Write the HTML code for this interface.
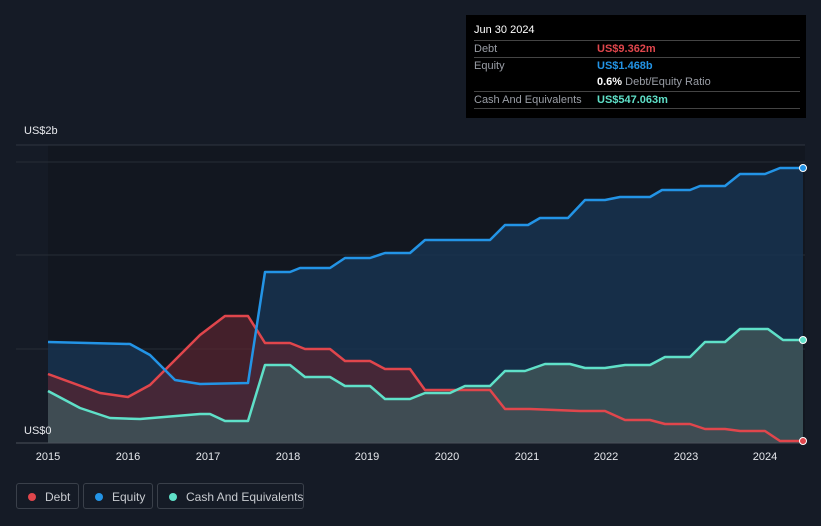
<!DOCTYPE html>
<html><head><meta charset="utf-8"><style>
body{margin:0;width:821px;height:526px;background:#151b26;font-family:"Liberation Sans",sans-serif;overflow:hidden;position:relative}
.tt{position:absolute;left:466px;top:15px;width:340px;height:103px;background:#000;color:#fff;font-size:11px}
.tt .r{position:absolute;left:8px;width:326px;border-top:1px solid #444;height:17px;line-height:17px}
.lab{color:#9a9ea6}
.leg{position:absolute;top:483px;height:26px;border:1px solid #3a404a;border-radius:3px;color:#c8cbd0;font-size:12px;line-height:26px;box-sizing:border-box;white-space:nowrap}
.leg i{position:absolute;left:11px;top:9px;width:8px;height:8px;border-radius:50%}
.leg span{position:absolute;left:28px;white-space:nowrap}
.yr{position:absolute;top:451px;color:#e6e8ec;font-size:11px;transform:translateX(-50%)}
</style></head><body>
<svg width="821" height="526" style="position:absolute;left:0;top:0">
<rect x="48" y="145" width="757" height="298" fill="#121720"/>
<line x1="16" y1="145" x2="805" y2="145" stroke="#2e3440"/>
<line x1="16" y1="162" x2="805" y2="162" stroke="#262c36"/>
<line x1="16" y1="255" x2="805" y2="255" stroke="#262c36"/>
<line x1="16" y1="349" x2="805" y2="349" stroke="#262c36"/>
<polygon fill="#173250" fill-opacity="0.85" points="48,443 48,342 130,344 150,355 175,380 200,384 248,383 265,272 290,272 300,268 330,268 345,258 370,258 385,253 410,253 425,240 460,240 490,240 505,225 528,225 540,218 568,218 585,200 605,200 620,197 650,197 662,190 690,190 700,186 725,186 740,174 765,174 780,168 803,168 803,443"/>
<polygon fill="#5a2530" fill-opacity="0.7" points="48,443 48,374 100,393 128,397 150,385 200,335 225,316 248,316 265,343 290,343 305,349 330,349 345,361 370,361 385,369 410,369 425,390 460,390 490,390 505,409 530,409 580,411 605,411 625,420 650,420 665,424 690,424 705,429 725,429 740,431 765,431 780,441 803,441 803,443"/>
<polygon fill="#3e5358" fill-opacity="0.85" points="48,443 48,391 80,408 110,418 140,419 200,414 210,414 225,421 248,421 265,365 290,365 305,377 330,377 345,386 370,386 385,399 410,399 425,393 450,393 465,386 490,386 505,371 525,371 545,364 570,364 585,368 605,368 625,365 650,365 665,357 690,357 705,342 725,342 740,329 768,329 783,340 803,340 803,443"/>
<g fill="none" stroke-width="2.5" stroke-linejoin="round">
<polyline stroke="#e0464c" points="48,374 100,393 128,397 150,385 200,335 225,316 248,316 265,343 290,343 305,349 330,349 345,361 370,361 385,369 410,369 425,390 460,390 490,390 505,409 530,409 580,411 605,411 625,420 650,420 665,424 690,424 705,429 725,429 740,431 765,431 780,441 803,441"/>
<polyline stroke="#2394e6" points="48,342 130,344 150,355 175,380 200,384 248,383 265,272 290,272 300,268 330,268 345,258 370,258 385,253 410,253 425,240 460,240 490,240 505,225 528,225 540,218 568,218 585,200 605,200 620,197 650,197 662,190 690,190 700,186 725,186 740,174 765,174 780,168 803,168"/>
<polyline stroke="#5fe0c8" points="48,391 80,408 110,418 140,419 200,414 210,414 225,421 248,421 265,365 290,365 305,377 330,377 345,386 370,386 385,399 410,399 425,393 450,393 465,386 490,386 505,371 525,371 545,364 570,364 585,368 605,368 625,365 650,365 665,357 690,357 705,342 725,342 740,329 768,329 783,340 803,340"/>
</g>
<line x1="16" y1="443" x2="805" y2="443" stroke="#4a505a"/>
<circle cx="803" cy="168" r="3.5" fill="#2394e6" stroke="#fff" stroke-width="1"/>
<circle cx="803" cy="340" r="3.5" fill="#5fe0c8" stroke="#fff" stroke-width="1"/>
<circle cx="803" cy="441" r="3.5" fill="#e0464c" stroke="#fff" stroke-width="1"/>
</svg>
<div style="position:absolute;left:24px;top:125px;color:#e6e8ec;font-size:11px">US$2b</div>
<div style="position:absolute;left:24px;top:425px;color:#e6e8ec;font-size:11px">US$0</div>
<div class="yr" style="left:48px">2015</div><div class="yr" style="left:128px">2016</div><div class="yr" style="left:208px">2017</div><div class="yr" style="left:288px">2018</div><div class="yr" style="left:367px">2019</div><div class="yr" style="left:447px">2020</div><div class="yr" style="left:527px">2021</div><div class="yr" style="left:606px">2022</div><div class="yr" style="left:686px">2023</div><div class="yr" style="left:765px">2024</div>
<div class="tt">
<div style="position:absolute;left:8px;top:9px;font-size:11px">Jun 30 2024</div>
<div class="r" style="top:25px"><span class="lab">Debt</span><span style="position:absolute;left:123px;color:#e0464c;font-weight:bold">US$9.362m</span></div>
<div class="r" style="top:42px"><span class="lab">Equity</span><span style="position:absolute;left:123px;color:#2394e6;font-weight:bold">US$1.468b</span></div>
<div class="r" style="top:59px;border-top:none"><span style="position:absolute;left:123px"><b>0.6%</b> <span class="lab">Debt/Equity Ratio</span></span></div>
<div class="r" style="top:76px"><span class="lab">Cash And Equivalents</span><span style="position:absolute;left:123px;color:#5fe0c8;font-weight:bold">US$547.063m</span></div>
<div class="r" style="top:93px;height:0"></div>
</div>
<div class="leg" style="left:16px;width:63px"><i style="background:#e0464c"></i><span>Debt</span></div>
<div class="leg" style="left:83px;width:70px"><i style="background:#2394e6"></i><span>Equity</span></div>
<div class="leg" style="left:157px;width:147px"><i style="background:#5fe0c8"></i><span>Cash And Equivalents</span></div>
</body></html>
